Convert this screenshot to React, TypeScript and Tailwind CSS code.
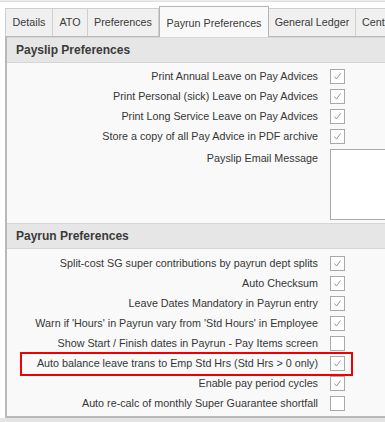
import React from "react";

const font = { fontFamily: '"Liberation Sans", Arial, sans-serif' };

interface TabProps {
  label: string;
  width: string;
  active?: boolean;
}

const Tab: React.FC<TabProps> = ({ label, width, active }) =>
  active ? (
    <div
      className={`${width} h-[31px] -mb-px z-10 flex items-center justify-center border border-b-0 border-[#b4b4b4] bg-[#f9f9f9] text-[10.75px] text-[#3a3a3a] pt-[3px]`}
    >
      {label}
    </div>
  ) : (
    <div
      className={`${width} h-[28px] flex items-center justify-center border-t border-r border-[#cfcfcf] bg-[#f0f0f0] text-[10.75px] text-[#3a3a3a] whitespace-nowrap overflow-hidden`}
    >
      {label}
    </div>
  );

const Check: React.FC<{ checked?: boolean }> = ({ checked }) => (
  <div className="w-[15px] h-[15px] border border-[#a9a9a9] bg-white flex items-center justify-center">
    {checked && (
      <svg width="9" height="9" viewBox="0 0 9 9">
        <path d="M1.5 4.5 L3.5 7 L7.5 1.5" fill="none" stroke="#9a9a9a" strokeWidth="1" />
      </svg>
    )}
  </div>
);

const Row: React.FC<{ label: string; checked?: boolean; highlight?: boolean }> = ({
  label,
  checked,
  highlight,
}) => (
  <div className="relative h-[20px] flex items-center">
    <div className="flex-1 text-right pr-[12px] text-[10.75px] text-[#363636] whitespace-nowrap">
      {label}
    </div>
    <div className="w-[55px] flex items-center">
      <Check checked={checked} />
    </div>
    {highlight && (
      <div className="absolute left-[13px] right-[32px] top-[-1px] bottom-[-3px] border-2 border-[#f00000]" />
    )}
  </div>
);

const SectionHeader: React.FC<{ title: string }> = ({ title }) => (
  <div className="h-[26px] flex items-center pl-[9px] bg-[#e6e6e6] border-t border-b border-[#d6d6d6] text-[12px] font-bold text-[#3a3a3a]">
    {title}
  </div>
);

export default function App() {
  const payslip = [
    { label: "Print Annual Leave on Pay Advices", checked: true },
    { label: "Print Personal (sick) Leave on Pay Advices", checked: true },
    { label: "Print Long Service Leave on Pay Advices", checked: true },
    { label: "Store a copy of all Pay Advice in PDF archive", checked: true },
  ];

  const payrun = [
    { label: "Split-cost SG super contributions by payrun dept splits", checked: true },
    { label: "Auto Checksum", checked: true },
    { label: "Leave Dates Mandatory in Payrun entry", checked: true },
    { label: "Warn if 'Hours' in Payrun vary from 'Std Hours' in Employee", checked: true },
    { label: "Show Start / Finish dates in Payrun - Pay Items screen", checked: false },
    { label: "Auto balance leave trans to Emp Std Hrs (Std Hrs > 0 only)", checked: true, highlight: true },
    { label: "Enable pay period cycles", checked: true },
    { label: "Auto re-calc of monthly Super Guarantee shortfall", checked: false },
  ];

  return (
    <div className="w-[385px] h-[422px] bg-white overflow-hidden flex flex-col" style={font}>
      <div className="h-[2px] bg-[#ececec] border-b border-[#e0e0e0]" />
      <div className="h-[4px]" />

      {/* Tabs */}
      <div className="flex items-end pl-[5px] h-[30px]">
        <div className="flex items-end border-l border-[#cfcfcf]">
          <Tab label="Details" width="w-[47px]" />
          <Tab label="ATO" width="w-[35px]" />
          <Tab label="Preferences" width="w-[71px]" />
        </div>
        <Tab label="Payrun Preferences" width="w-[110px]" active />
        <Tab label="General Ledger" width="w-[87px]" />
        <div className="flex-1 h-[28px] flex items-center pl-[6px] border-t border-[#cfcfcf] bg-[#f0f0f0] text-[10.75px] text-[#3a3a3a] whitespace-nowrap overflow-hidden">
          Cent
        </div>
      </div>

      {/* Panel */}
      <div className="ml-[5px] h-[382px] border-l-2 border-t border-b-2 border-[#b9b9b9] bg-[#f9f9f9] flex flex-col">
        <SectionHeader title="Payslip Preferences" />
        <div className="pt-[3px]">
          {payslip.map((r) => (
            <Row key={r.label} label={r.label} checked={r.checked} />
          ))}
          <div className="flex items-start mt-[3px]">
            <div className="flex-1 text-right pr-[12px] text-[10.75px] text-[#363636] pt-[1px]">
              Payslip Email Message
            </div>
            <div className="w-[55px] h-[71px] border-l border-t border-b border-[#aaaaaa] bg-white" />
          </div>
        </div>
        <div className="h-[3px]" />
        <SectionHeader title="Payrun Preferences" />
        <div className="pt-[4px]">
          {payrun.map((r) => (
            <Row key={r.label} label={r.label} checked={r.checked} highlight={r.highlight} />
          ))}
        </div>
      </div>
      <div className="flex-1 bg-[#e4e4e4]" />
    </div>
  );
}
